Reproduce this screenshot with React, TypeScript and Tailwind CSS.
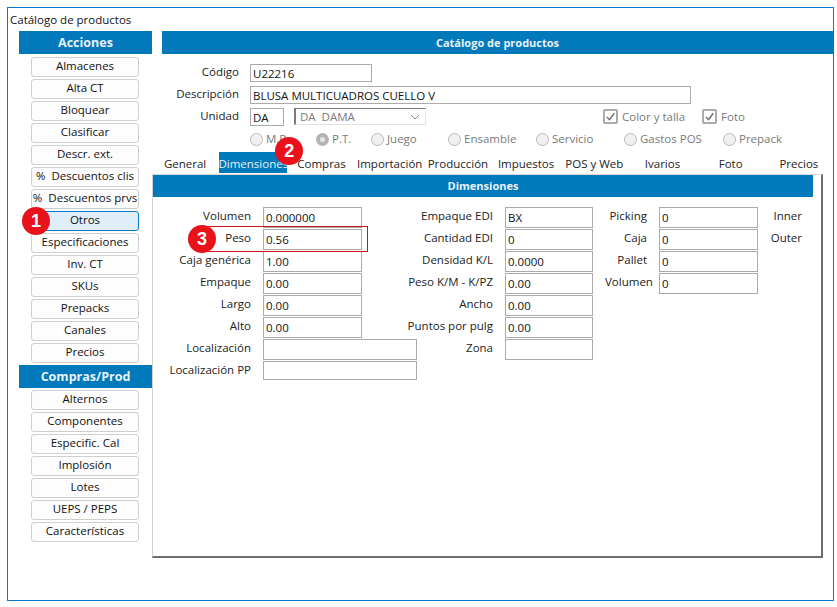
// Catálogo de productos: Dimensiones tab with numbered callouts.
import { type ReactElement, type ReactNode } from 'react';

const FONT = 'font-["Open_Sans","Noto_Sans",sans-serif]';

const ACCIONES = [
  'Almacenes',
  'Alta CT',
  'Bloquear',
  'Clasificar',
  'Descr. ext.',
  '%  Descuentos clis',
  '%  Descuentos prvs',
  'Otros',
  'Especificaciones',
  'Inv. CT',
  'SKUs',
  'Prepacks',
  'Canales',
  'Precios',
];

const COMPRAS = ['Alternos', 'Componentes', 'Especific. Cal', 'Implosión', 'Lotes', 'UEPS / PEPS', 'Características'];

const TABS = ['General', 'Dimensiones', 'Compras', 'Importación', 'Producción', 'Impuestos', 'POS y Web', 'Ivarios', 'Foto', 'Precios'];

const RADIOS = [
  { label: 'M.P.', width: 'w-[66px]' },
  { label: 'P.T.', width: 'w-[55px]', checked: true },
  { label: 'Juego', width: 'w-[77px]' },
  { label: 'Ensamble', width: 'w-[88px]' },
  { label: 'Servicio', width: 'w-[88px]' },
  { label: 'Gastos POS', width: 'w-[99px]' },
  { label: 'Prepack', width: 'w-[80px]' },
];

function Badge({ n, className }: { n: number; className: string }): ReactElement {
  return (
    <span
      className={`absolute z-10 flex h-[28px] w-[28px] items-center justify-center rounded-full bg-[#e9121b] font-["Liberation_Sans",sans-serif] text-[18px] font-bold text-white ${className}`}
    >
      {n}
    </span>
  );
}

function SideHeader({ children }: { children: ReactNode }): ReactElement {
  return (
    <div className="flex h-[23px] items-center justify-center bg-[#0279ba] pt-[1px] text-[12.5px] font-bold text-[#e9f2f8]">
      {children}
    </div>
  );
}

function SideButton({ label }: { label: string }): ReactElement {
  const active = label === 'Otros';
  return (
    <div className="relative">
      {active && <Badge n={1} className="left-[-9px] top-[-4px]" />}
      <div
        className={`flex h-[20px] w-[108px] items-center justify-center whitespace-pre rounded-[3px] border pb-[2px] text-[11.5px] leading-none text-[#111] ${
          active ? 'border-[#0a78c8] bg-[#e0eef9]' : 'border-[#cfcfcf] bg-[#fdfdfd]'
        }`}
      >
        {label}
      </div>
    </div>
  );
}

function Field({ value, className = 'w-[99px]' }: { value?: string; className?: string }): ReactElement {
  return (
    <div className={`flex h-[21px] items-center border border-[#ababab] bg-white pl-[2px] pt-[1px] text-[11.5px] text-[#111] ${className}`}>
      {value}
    </div>
  );
}

function Label({ children }: { children?: ReactNode }): ReactElement {
  return <div className="h-[18px] self-start whitespace-nowrap text-right text-[11.5px] leading-[18px] text-[#222]">{children}</div>;
}

function Radio({ label, checked, width }: { label: string; checked?: boolean; width: string }): ReactElement {
  return (
    <div className={`flex items-center gap-[3px] text-[11.5px] text-[#7a7a7a] ${width}`}>
      <span
        className={`h-[13px] w-[13px] rounded-full ${
          checked ? 'border-[4px] border-[#b4b4b4] bg-[#e6e6e6]' : 'border border-[#b8b8b8] bg-[#f1f1f1]'
        }`}
      />
      {label}
    </div>
  );
}

function Check({ label }: { label: string }): ReactElement {
  return (
    <div className="flex items-center gap-[4px] text-[11.5px] text-[#7a7a7a]">
      <span className="flex h-[15px] w-[15px] items-center justify-center rounded-[2px] border-2 border-[#ababab] bg-white">
        <svg viewBox="0 0 12 12" className="h-[11px] w-[11px]">
          <path d="M2 6.5 L5 9.5 L10 2.5" fill="none" stroke="#6e6e6e" strokeWidth="1.6" />
        </svg>
      </span>
      {label}
    </div>
  );
}

export default function App(): ReactElement {
  return (
    <div className={`h-[607px] w-[837px] overflow-hidden bg-white pl-[7px] pt-[7px] ${FONT}`}>
      <div className="h-[594px] w-[827px] border border-[#0a78d2]">
        <div className="h-[23px] pl-[2px] pt-[3px] text-[11.5px] leading-[18px] text-[#111]">Catálogo de productos</div>
        <div className="flex">
          <aside className="ml-[11px] w-[133px]">
            <SideHeader>Acciones</SideHeader>
            <div className="mb-[2px] mt-[3px] flex flex-col gap-[2px] pl-[12px]">
              {ACCIONES.map((a) => (
                <SideButton key={a} label={a} />
              ))}
            </div>
            <SideHeader>Compras/Prod</SideHeader>
            <div className="mt-[2px] flex flex-col gap-[2px] pl-[12px]">
              {COMPRAS.map((a) => (
                <SideButton key={a} label={a} />
              ))}
            </div>
          </aside>

          <main className="w-[681px]">
            <div className="ml-[10px] flex h-[23px] items-center justify-center bg-[#0279ba] pt-[1px] text-[11px] font-bold text-[#e9f2f8]">
              Catálogo de productos
            </div>

            <div className="mt-[10px] flex flex-col gap-[4px]">
              <div className="flex items-start gap-[11px]">
                <div className="w-[87px] text-right text-[11.5px] leading-[16px] text-[#222]">Código</div>
                <Field value="U22216" className="!h-[18px] w-[122px]" />
              </div>
              <div className="flex items-start gap-[11px]">
                <div className="w-[87px] text-right text-[11.5px] leading-[16px] text-[#222]">Descripción</div>
                <Field value="BLUSA MULTICUADROS CUELLO V" className="!h-[18px] w-[441px]" />
              </div>
              <div className="flex items-start">
                <div className="w-[87px] text-right text-[11.5px] leading-[16px] text-[#222]">Unidad</div>
                <Field value="DA" className="ml-[11px] !h-[18px] w-[34px]" />
                <div className="ml-[10px] flex h-[17px] w-[132px] items-center justify-between border-b border-l-2 border-r border-t border-b-[#e3e3e3] border-l-[#7a7a7a] border-r-[#e3e3e3] border-t-[#7a7a7a] pl-[4px] pr-[5px] text-[11.5px] text-[#7a7a7a]">
                  <span className="whitespace-pre">DA  DAMA</span>
                  <svg viewBox="0 0 10 6" className="h-[6px] w-[10px]">
                    <path d="M1 1 L5 5 L9 1" fill="none" stroke="#8a8a8a" strokeWidth="1" />
                  </svg>
                </div>
                <div className="ml-[177px] flex gap-[17px]">
                  <Check label="Color y talla" />
                  <Check label="Foto" />
                </div>
              </div>
            </div>

            <div className="mt-[4px] flex h-[18px] pl-[98px]">
              {RADIOS.map((r) => (
                <Radio key={r.label} label={r.label} checked={r.checked} width={r.width} />
              ))}
            </div>

            <div className="-ml-[1px] mt-[4px] grid h-[21px] w-[682px] grid-cols-10 text-[11.5px] text-[#222]">
              {TABS.map((t) => (
                <div
                  key={t}
                  className={`relative flex items-center justify-center whitespace-nowrap pt-[3px] ${
                    t === 'Dimensiones' ? 'bg-[#0279ba] text-[#e6f1f8]' : ''
                  }`}
                >
                  {t === 'Dimensiones' && <Badge n={2} className="left-[56px] top-[-15px]" />}
                  {t}
                </div>
              ))}
            </div>

            <section className="mt-[1px] h-[384px] w-[671px] border-b-2 border-l border-r-2 border-t border-b-[#6e6e6e] border-l-[#d0d0d0] border-r-[#6e6e6e] border-t-[#d8d8d8]">
              <div className="flex h-[22px] w-[660px] items-center justify-center bg-[#0279ba] text-[11px] font-bold text-[#e9f2f8]">
                Dimensiones
              </div>
              <div className="mt-[10px] grid grid-cols-[90px_99px_119px_88px_42px_99px_32px] gap-x-[12px] gap-y-[1px] pl-[8px]">
                <Label>Volumen</Label>
                <Field value="0.000000" />
                <Label>Empaque EDI</Label>
                <Field value="BX" className="w-[88px]" />
                <Label>Picking</Label>
                <Field value="0" />
                <Label>Inner</Label>

                <div className="relative h-[21px]">
                  <Badge n={3} className="left-[27px] top-[-4px]" />
                  <span className="absolute left-[38px] top-[-3px] z-0 h-[26px] w-[169px] border border-l-0 border-[#d4101c]" />
                  <div className="relative z-10 h-[18px] text-right text-[11.5px] leading-[18px] text-[#222]">Peso</div>
                </div>
                <Field value="0.56" />
                <Label>Cantidad EDI</Label>
                <Field value="0" className="w-[88px]" />
                <Label>Caja</Label>
                <Field value="0" />
                <Label>Outer</Label>

                <Label>Caja genérica</Label>
                <Field value="1.00" />
                <Label>Densidad K/L</Label>
                <Field value="0.0000" className="w-[88px]" />
                <Label>Pallet</Label>
                <Field value="0" />
                <Label />

                <Label>Empaque</Label>
                <Field value="0.00" />
                <Label>Peso K/M - K/PZ</Label>
                <Field value="0.00" className="w-[88px]" />
                <Label>Volumen</Label>
                <Field value="0" />
                <Label />

                <Label>Largo</Label>
                <Field value="0.00" />
                <Label>Ancho</Label>
                <Field value="0.00" className="w-[88px]" />
                <div className="col-span-3" />

                <Label>Alto</Label>
                <Field value="0.00" />
                <Label>Puntos por pulg</Label>
                <Field value="0.00" className="w-[88px]" />
                <div className="col-span-3" />

                <Label>Localización</Label>
                <Field className="w-[154px]" />
                <Label>Zona</Label>
                <Field className="w-[88px]" />
                <div className="col-span-3" />

                <Label>Localización PP</Label>
                <Field className="w-[154px] !h-[19px]" />
              </div>
            </section>
          </main>
        </div>
      </div>
    </div>
  );
}
